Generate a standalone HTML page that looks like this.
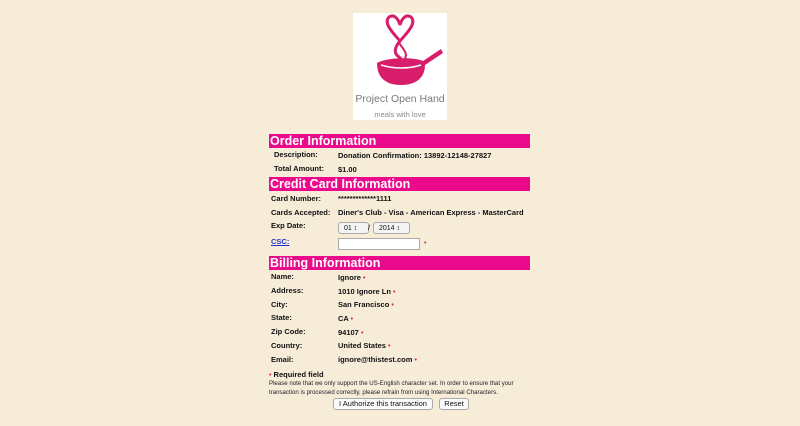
<!DOCTYPE html>
<html><head><meta charset="utf-8"><style>
body{margin:0;width:800px;height:426px;background:#f6ecd8;font-family:"Liberation Sans",Arial,sans-serif;position:relative;overflow:hidden;color:#111}
.a{position:absolute;white-space:nowrap}
.h{position:absolute;left:269px;width:261px;height:14px;background:#ec0a8c;color:#fff;font-weight:bold;font-size:12.5px;line-height:14px;padding-left:1px;box-sizing:border-box}
.l{position:absolute;font-size:7.5px;font-weight:bold;white-space:nowrap}
.r{color:#e0204a;font-size:7px}
.sel{position:absolute;top:222px;height:10px;border:1px solid #aaa;border-radius:3px;background:#f4f4f4;font-size:7px;line-height:11px;padding-left:5px;box-sizing:content-box}
.btn{position:absolute;top:398px;height:10px;border:1px solid #aaa;border-radius:3px;background:#fafafa;font-size:7.5px;line-height:10px;text-align:center}
</style></head><body>
<div class="a" style="left:353px;top:13px;width:94px;height:107px;background:#fff">
<svg width="94" height="85" viewBox="0 0 94 85">
<path d="M47 28 C40 20 30 10 36 4 C42 0 46 8 47 12 C48 8 52 0 58 4 C64 10 54 20 47 28 C42 34 40 40 46 44 C52 48 44 52 42 56" fill="none" stroke="#d81e6a" stroke-width="3"/>
<path d="M46 30 C52 38 56 42 50 48" fill="none" stroke="#d81e6a" stroke-width="2"/>
<path d="M24 50 C34 44 62 44 70 48 L88 36 L90 40 L72 52 C72 62 66 72 48 72 C30 72 24 62 24 50Z" fill="#d81e6a"/>
<path d="M28 52 C40 56 56 56 68 52" fill="none" stroke="#fff" stroke-width="1.5"/>
</svg>
<div class="a" style="left:0;top:80px;width:94px;text-align:center;font-size:10.5px;color:#7a7a7a">Project Open Hand</div>
<div class="a" style="left:0;top:97px;width:94px;text-align:center;font-size:7.5px;color:#888">meals with love</div>
</div>

<div class="h" style="top:134px">Order Information</div>
<div class="l" style="left:274px;top:150px">Description:</div>
<div class="l" style="left:338px;top:151px">Donation Confirmation: 13892-12148-27827</div>
<div class="l" style="left:274px;top:164px">Total Amount:</div>
<div class="l" style="left:338px;top:165px">$1.00</div>

<div class="h" style="top:177px">Credit Card Information</div>
<div class="l" style="left:271px;top:194px">Card Number:</div>
<div class="l" style="left:338px;top:194px">*************1111</div>
<div class="l" style="left:271px;top:208px">Cards Accepted:</div>
<div class="l" style="left:338px;top:208px">Diner's Club - Visa - American Express - MasterCard</div>
<div class="l" style="left:271px;top:221px">Exp Date:</div>
<div class="sel" style="left:338px;width:24px">01 &#8597;</div>
<div class="l" style="left:368px;top:223px;font-weight:normal">/</div>
<div class="sel" style="left:373px;width:30px">2014 &#8597;</div>
<div class="l" style="left:271px;top:237px;color:#2233cc;text-decoration:underline">CSC:</div>
<div class="a" style="left:338px;top:238px;width:82px;height:12px;background:#fff;border:1px solid #aaa;box-sizing:border-box"></div>
<div class="a r" style="left:424px;top:240px">•</div>

<div class="h" style="top:256px">Billing Information</div>
<div class="l" style="left:271px;top:272px">Name:</div><div class="l" style="left:338px;top:273px">Ignore <span class="r">•</span></div>
<div class="l" style="left:271px;top:286px">Address:</div><div class="l" style="left:338px;top:287px">1010 Ignore Ln <span class="r">•</span></div>
<div class="l" style="left:271px;top:300px">City:</div><div class="l" style="left:338px;top:300px">San Francisco <span class="r">•</span></div>
<div class="l" style="left:271px;top:313px">State:</div><div class="l" style="left:338px;top:314px">CA <span class="r">•</span></div>
<div class="l" style="left:271px;top:327px">Zip Code:</div><div class="l" style="left:338px;top:328px">94107 <span class="r">•</span></div>
<div class="l" style="left:271px;top:341px">Country:</div><div class="l" style="left:338px;top:341px">United States <span class="r">•</span></div>
<div class="l" style="left:271px;top:355px">Email:</div><div class="l" style="left:338px;top:355px">ignore@thistest.com <span class="r">•</span></div>
<div class="l" style="left:269px;top:370px"><span class="r">•</span> Required field</div>
<div class="a" style="left:269px;top:380px;font-size:6.1px;line-height:8.5px;color:#222">Please note that we only support the US-English character set. In order to ensure that your<br>transaction is processed correctly, please refrain from using International Characters.</div>
<div class="btn" style="left:333px;width:98px">I Authorize this transaction</div>
<div class="btn" style="left:439px;width:28px">Reset</div>
</body></html>
